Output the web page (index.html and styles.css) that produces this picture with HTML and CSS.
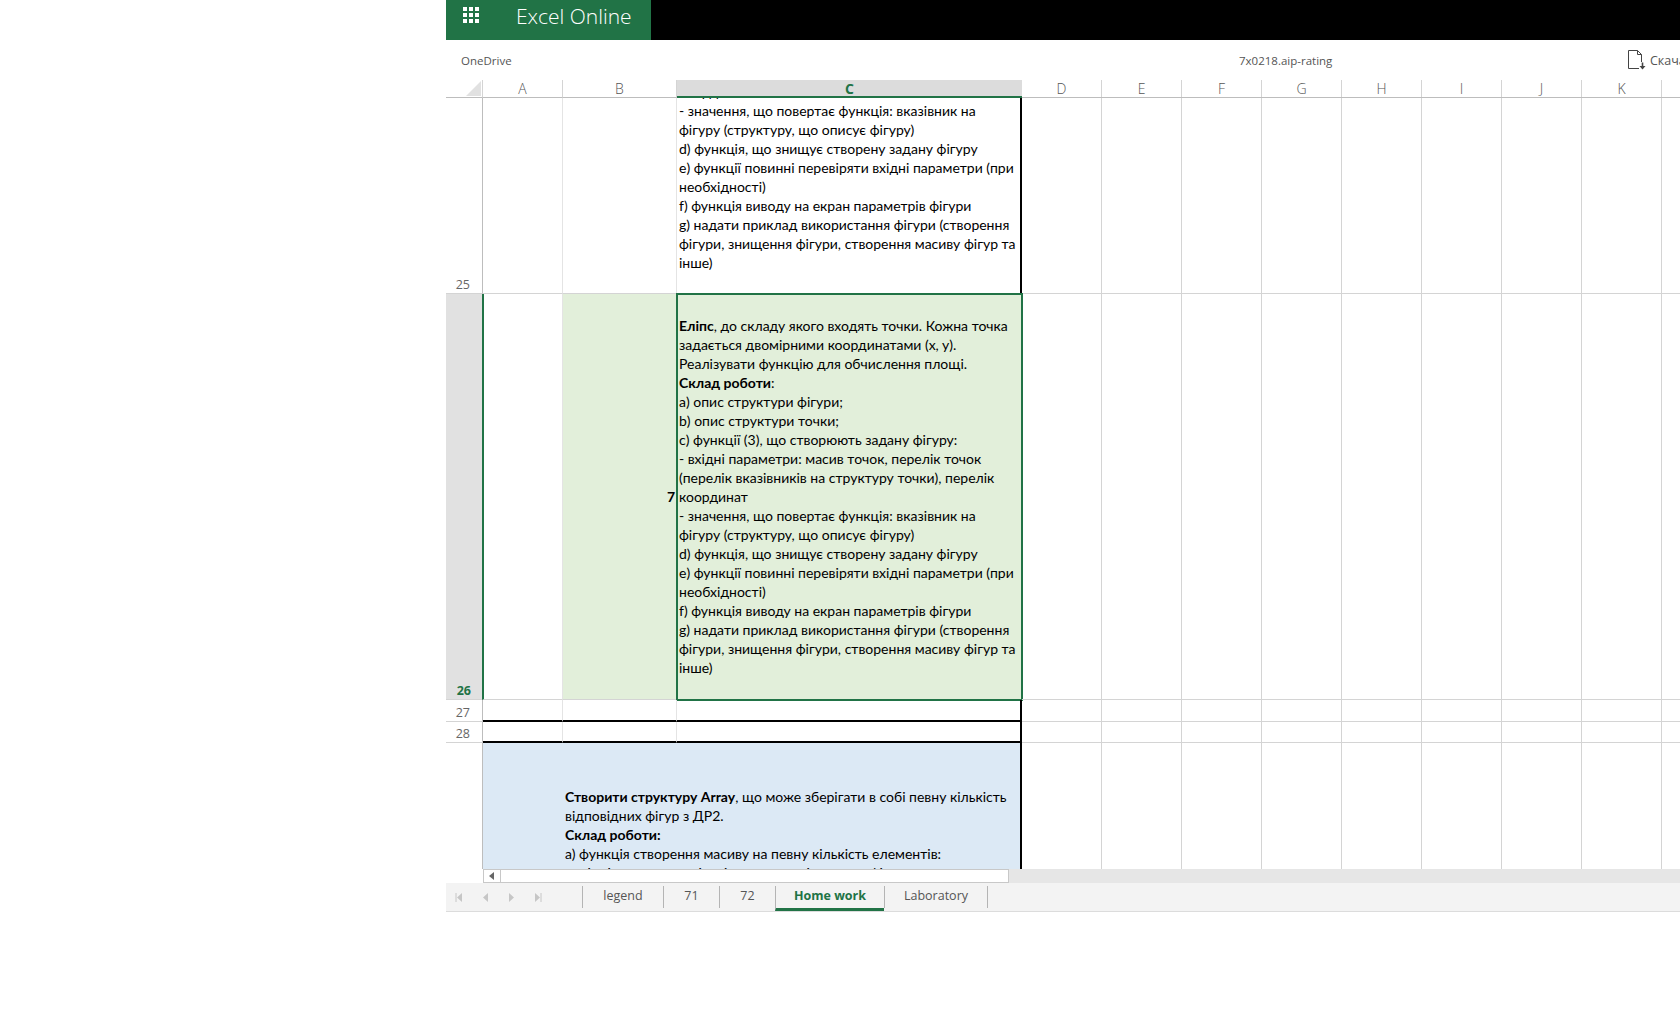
FILE: index.html
```html
<!DOCTYPE html>
<html lang="uk">
<head>
  <meta charset="UTF-8">
  <title>7x0218.aip-rating - Excel Online</title>
  <link rel="stylesheet" href="styles.css">
</head>
<body>
  <div class="app">
    <header class="topbar">
      <div class="brand">
        <div class="waffle">
          <i></i><i></i><i></i><i></i><i></i><i></i><i></i><i></i><i></i>
        </div>
        <span class="brand-name">Excel Online</span>
      </div>
    </header>

    <div class="ribbon">
      <a class="crumb">OneDrive</a>
      <span class="file-name">7x0218.aip-rating</span>
      <a class="download">
        <svg width="18" height="20" viewBox="0 0 18 20" fill="none" stroke="#444" stroke-width="1">
          <path d="M11 18.5H0.5V0.5H9.5L13.5 4.5V12"/>
          <path d="M9.5 0.5V4.5H13.5"/>
          <path d="M14.5 12.5V18" stroke-width="1.6"/>
          <path d="M11.5 16L14.5 19.5L17.5 16H11.5Z" fill="#444" stroke="none"/>
        </svg>
        <span>Скачать</span>
      </a>
    </div>

    <div class="sheet">
      <div class="row col-heads">
        <div class="corner"><span class="corner-mark"></span></div>
        <div class="col-head">A</div>
        <div class="col-head">B</div>
        <div class="col-head col-active">C</div>
        <div class="col-rest">
          <div class="col-head">D</div>
          <div class="col-head">E</div>
          <div class="col-head">F</div>
          <div class="col-head">G</div>
          <div class="col-head">H</div>
          <div class="col-head">I</div>
          <div class="col-head">J</div>
          <div class="col-head">K</div>
        </div>
      </div>

      <div class="row row-25">
        <div class="row-head">25</div>
        <div class="cell"></div>
        <div class="cell"></div>
        <div class="cell cell-text cell-right">
          <p>координат<br>
          - значення, що повертає функція: вказівник на<br>
          фігуру (структуру, що описує фігуру)<br>
          d) функція, що знищує створену задану фігуру<br>
          e) функції повинні перевіряти вхідні параметри (при<br>
          необхідності)<br>
          f) функція виводу на екран параметрів фігури<br>
          g) надати приклад використання фігури (створення<br>
          фігури, знищення фігури, створення масиву фігур та<br>
          інше)</p>
        </div>
        <div class="rest"></div>
      </div>

      <div class="row row-26">
        <div class="row-head row-head-active">26</div>
        <div class="cell cell-after-head"></div>
        <div class="cell cell-green cell-value">7</div>
        <div class="cell cell-green cell-text cell-selected">
          <p><b>Еліпс</b>, до складу якого входять точки. Кожна точка<br>
          задається двомірними координатами (x, y).<br>
          Реалізувати функцію для обчислення площі.<br>
          <b>Склад роботи</b>:<br>
          a) опис структури фігури;<br>
          b) опис структури точки;<br>
          c) функції (3), що створюють задану фігуру:<br>
          - вхідні параметри: масив точок, перелік точок<br>
          (перелік вказівників на структуру точки), перелік<br>
          координат<br>
          - значення, що повертає функція: вказівник на<br>
          фігуру (структуру, що описує фігуру)<br>
          d) функція, що знищує створену задану фігуру<br>
          e) функції повинні перевіряти вхідні параметри (при<br>
          необхідності)<br>
          f) функція виводу на екран параметрів фігури<br>
          g) надати приклад використання фігури (створення<br>
          фігури, знищення фігури, створення масиву фігур та<br>
          інше)</p>
        </div>
        <div class="rest"></div>
      </div>

      <div class="row row-27">
        <div class="row-head">27</div>
        <div class="cell cell-ruled"></div>
        <div class="cell cell-ruled"></div>
        <div class="cell cell-ruled cell-right"></div>
        <div class="rest"></div>
      </div>

      <div class="row row-28">
        <div class="row-head">28</div>
        <div class="cell cell-ruled"></div>
        <div class="cell cell-ruled"></div>
        <div class="cell cell-ruled cell-right"></div>
        <div class="rest"></div>
      </div>

      <div class="row row-29">
        <div class="row-head row-head-open"></div>
        <div class="cell cell-blue"></div>
        <div class="cell cell-blue cell-merged">
          <p><b>Створити структуру Array</b>, що може зберігати в собі певну кількість<br>
          відповідних фігур з ДР2.<br>
          <b>Склад роботи:</b><br>
          a) функція створення масиву на певну кількість елементів:<br>
          - вхідні параметри: кількість елементів масиву фігур</p>
        </div>
        <div class="rest rest-open"></div>
      </div>
    </div>

    <div class="hscroll">
      <div class="hscroll-btn">
        <svg width="6" height="8" viewBox="0 0 6 8"><path d="M5 0V8L0 4Z" fill="#666"/></svg>
      </div>
      <div class="hscroll-thumb"></div>
      <div class="hscroll-track"></div>
    </div>

    <div class="tabbar">
      <div class="tab-nav">
        <svg width="7" height="9" viewBox="0 0 7 9"><path d="M1 0V9" stroke="#c6c6c6"/><path d="M7 0V9L2 4.5Z" fill="#c6c6c6"/></svg>
        <svg width="5" height="9" viewBox="0 0 5 9"><path d="M5 0V9L0 4.5Z" fill="#c6c6c6"/></svg>
        <svg width="5" height="9" viewBox="0 0 5 9"><path d="M0 0V9L5 4.5Z" fill="#c6c6c6"/></svg>
        <svg width="7" height="9" viewBox="0 0 7 9"><path d="M6 0V9" stroke="#c6c6c6"/><path d="M0 0V9L5 4.5Z" fill="#c6c6c6"/></svg>
      </div>
      <a class="tab tab-legend">legend</a>
      <a class="tab tab-num">71</a>
      <a class="tab tab-num">72</a>
      <a class="tab tab-active">Home work</a>
      <a class="tab tab-lab">Laboratory</a>
    </div>
  </div>
</body>
</html>
```

FILE: styles.css
```css
html, body {
  margin: 0;
  height: 100%;
  overflow: hidden;
  background: #fff;
}

.app {
  margin-left: 446px;
  width: 1234px;
  overflow: hidden;
  font-family: "Open Sans", "Noto Sans", sans-serif;
  color: #444;
}

/* top bar */
.topbar {
  height: 40px;
  background: #000;
}

.brand {
  display: flex;
  align-items: center;
  width: 205px;
  height: 40px;
  background: #217346;
  color: #fff;
}

.waffle {
  display: grid;
  grid-template-columns: repeat(3, 4px);
  gap: 2px;
  margin: 0 0 10px 17px;
}

.waffle i {
  width: 4px;
  height: 4px;
  background: #fff;
}

.brand-name {
  margin: 0 0 8px 37px;
  font-size: 21px;
  font-weight: 300;
  white-space: nowrap;
}

/* file line */
.ribbon {
  display: flex;
  align-items: center;
  height: 40px;
  font-size: 11.5px;
  color: #555;
  white-space: nowrap;
}

.crumb {
  flex: none;
  width: 793px;
  padding-left: 15px;
  box-sizing: border-box;
}

.file-name {
  flex: none;
  width: 389px;
}

.download {
  flex: none;
  display: flex;
  align-items: center;
  gap: 4px;
}

.download span {
  font-size: 12.5px;
}

/* grid */
.sheet {
  height: 789px;
  overflow: hidden;
}

.row {
  display: grid;
  grid-template-columns: 37px 80px 114px 345px 658px;
  box-sizing: border-box;
}

.col-heads {
  height: 18px;
  font-size: 14px;
  font-weight: 300;
  color: #555;
}

.corner {
  border-bottom: 1px solid #bdbdbd;
  border-right: 1px solid #d4d4d4;
  box-sizing: border-box;
}

.corner-mark {
  display: block;
  width: 0;
  height: 0;
  margin: 1px 0 0 20px;
  border-style: solid;
  border-width: 0 0 15px 15px;
  border-color: transparent transparent #e1e1e1 transparent;
}

.col-head {
  display: flex;
  align-items: center;
  justify-content: center;
  box-sizing: border-box;
  height: 18px;
  border-right: 1px solid #d4d4d4;
  border-bottom: 1px solid #bdbdbd;
}

.col-rest {
  display: grid;
  grid-template-columns: repeat(8, 80px) 18px;
  border-bottom: 1px solid #bdbdbd;
  height: 18px;
  box-sizing: border-box;
}

.col-rest .col-head {
  height: 17px;
  border-bottom: 0;
}

.col-active {
  background: #dcdcdc;
  color: #217346;
  font-weight: 700;
  border-bottom: 2px solid #217346;
  border-right: 0;
}

.row-head {
  display: flex;
  align-items: flex-end;
  justify-content: flex-end;
  box-sizing: border-box;
  padding: 0 12px 0 0;
  font-size: 12.5px;
  line-height: 16px;
  color: #666;
  border-right: 1px solid #bdbdbd;
  border-bottom: 1px solid #d4d4d4;
}

.row-head-active {
  background: #e1e1e1;
  color: #217346;
  font-weight: 700;
  border-right: 0;
}

.row-head-open {
  border-bottom: 0;
}

.cell {
  box-sizing: border-box;
  border-right: 1px solid #e4e4e4;
  border-bottom: 1px solid #d4d4d4;
  font-family: "Lato", "Open Sans", sans-serif;
  font-size: 14px;
  line-height: 19px;
  color: #000;
  white-space: nowrap;
  overflow: hidden;
}

.cell p {
  margin: 0;
}

.cell b {
  font-weight: 700;
}

.cell-text {
  display: flex;
  flex-direction: column;
  padding-left: 2px;
}

.cell-right {
  border-right: 2px solid #000;
}

.cell-green {
  background: #e2efda;
}

.cell-after-head {
  border-left: 2px solid #217346;
  margin-left: -1px;
}

.cell-value {
  display: flex;
  align-items: center;
  justify-content: flex-end;
  padding-right: 2px;
  font-weight: 700;
  border-right: 0;
}

.cell-selected {
  justify-content: center;
  padding-bottom: 2px;
  border-right: 0;
  border-bottom: 0;
  overflow: visible;
  outline: 2px solid #217346;
  outline-offset: -1px;
}

.cell-ruled {
  border-bottom: 2px solid #000;
}

.cell-blue {
  background: #dce9f5;
  border-right: 0;
  border-bottom: 0;
}

.cell-merged {
  grid-column: span 2;
  padding: 44px 0 0 2px;
  border-right: 2px solid #000;
}

.rest {
  box-sizing: border-box;
  border-bottom: 1px solid #d4d4d4;
  background: repeating-linear-gradient(90deg, transparent 0 79px, #d4d4d4 79px 80px);
}

.rest-open {
  border-bottom: 0;
}

.row-25 {
  height: 196px;
}

.row-25 .cell-text {
  justify-content: flex-end;
  padding-bottom: 21px;
}

.row-26 {
  height: 406px;
}

.row-27 {
  height: 22px;
}

.row-28 {
  height: 21px;
}

.row-29 {
  height: 127px;
}

/* scroll bar */
.hscroll {
  display: flex;
  height: 14px;
  padding-left: 37px;
}

.hscroll-btn {
  display: flex;
  align-items: center;
  justify-content: center;
  width: 18px;
  box-sizing: border-box;
  border: 1px solid #c8c8c8;
  background: #fff;
}

.hscroll-thumb {
  width: 508px;
  box-sizing: border-box;
  border: 1px solid #c8c8c8;
  border-left: 0;
  background: #fff;
}

.hscroll-track {
  flex: 1;
  background: #e6e6e6;
}

/* sheet tabs */
.tabbar {
  display: flex;
  align-items: stretch;
  height: 28px;
  background: #f3f3f3;
  border-bottom: 1px solid #dcdcdc;
  font-size: 12.5px;
  color: #555;
}

.tab-nav {
  display: flex;
  align-items: center;
  gap: 21px;
  width: 136px;
  padding-left: 9px;
  box-sizing: border-box;
}

.tab {
  display: flex;
  align-items: center;
  justify-content: center;
  box-sizing: border-box;
  height: 22px;
  margin-top: 3px;
  padding-bottom: 3px;
  border-left: 1px solid #b4b4b4;
}

.tab-legend {
  width: 81px;
}

.tab-num {
  width: 56px;
}

.tab-active {
  width: 109px;
  height: 25px;
  padding-bottom: 3px;
  color: #217346;
  font-weight: 700;
  border-bottom: 3px solid #217346;
}

.tab-lab {
  width: 104px;
  border-right: 1px solid #b4b4b4;
}
```
